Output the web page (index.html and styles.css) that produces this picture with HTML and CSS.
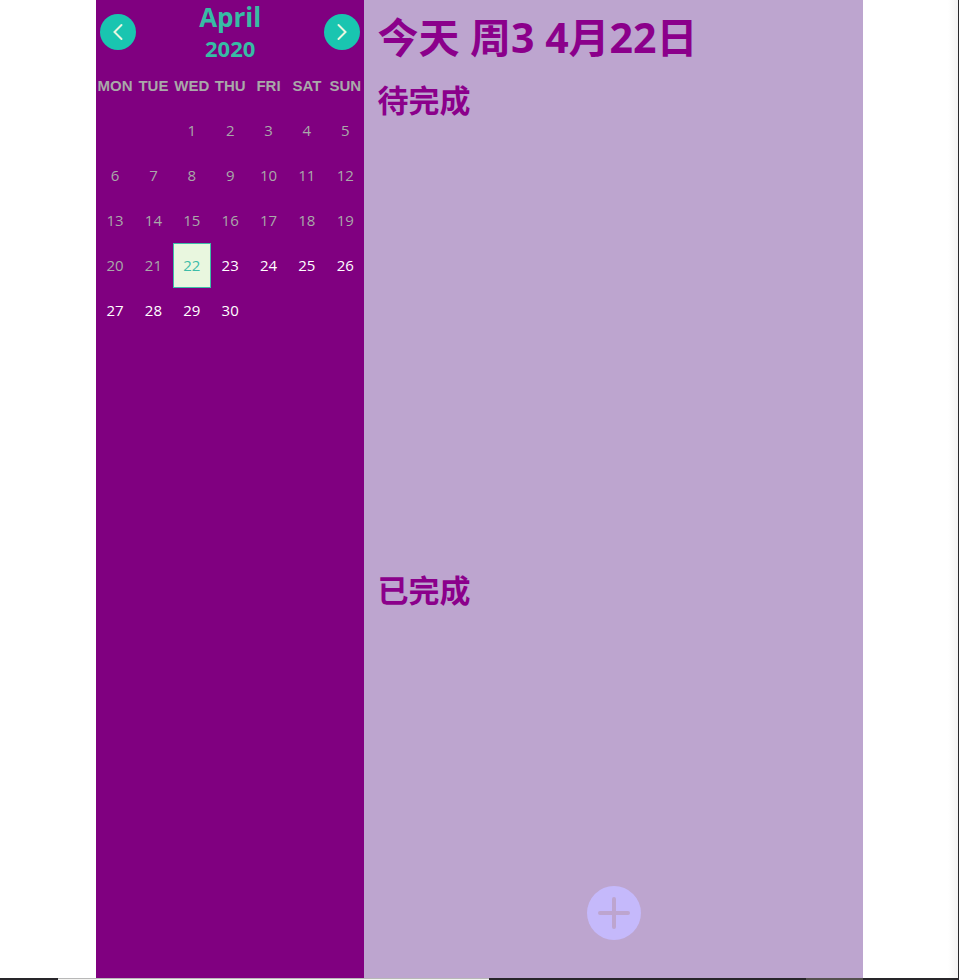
FILE: index.html
```
<!DOCTYPE html>
<html lang="zh-CN">
<head>
<meta charset="utf-8">
<meta name="viewport" content="width=device-width, initial-scale=1">
<title>April 2020</title>
<link rel="stylesheet" href="styles.css">
</head>
<body>
<div class="window">
  <div class="app">
    <aside class="calendar">
      <header class="calendar-head">
        <button class="nav" type="button" aria-label="Previous month">
          <svg viewBox="0 0 36 36" aria-hidden="true"><circle cx="18" cy="18" r="18"/><path d="M21.5 11 14.5 18l7 7"/></svg>
        </button>
        <div class="period"><span class="month">April</span><span class="year">2020</span></div>
        <button class="nav" type="button" aria-label="Next month">
          <svg viewBox="0 0 36 36" aria-hidden="true"><circle cx="18" cy="18" r="18"/><path d="m14.5 11 7 7-7 7"/></svg>
        </button>
      </header>
      <table class="days">
        <thead>
          <tr><th>MON</th><th>TUE</th><th>WED</th><th>THU</th><th>FRI</th><th>SAT</th><th>SUN</th></tr>
        </thead>
        <tbody>
          <tr><td></td><td></td><td>1</td><td>2</td><td>3</td><td>4</td><td>5</td></tr>
          <tr><td>6</td><td>7</td><td>8</td><td>9</td><td>10</td><td>11</td><td>12</td></tr>
          <tr><td>13</td><td>14</td><td>15</td><td>16</td><td>17</td><td>18</td><td>19</td></tr>
          <tr><td>20</td><td>21</td><td class="today">22</td><td class="next">23</td><td class="next">24</td><td class="next">25</td><td class="next">26</td></tr>
          <tr><td class="next">27</td><td class="next">28</td><td class="next">29</td><td class="next">30</td><td></td><td></td><td></td></tr>
        </tbody>
      </table>
    </aside>
    <main class="tasks">
      <h1>今天 周3 4月22日</h1>
      <section class="pending"><h2>待完成</h2></section>
      <section class="done"><h2>已完成</h2></section>
      <button class="add" type="button" aria-label="Add">
        <svg viewBox="0 0 54 54" aria-hidden="true"><circle cx="27" cy="27" r="27"/><path d="M27 13v28M13 27h28"/></svg>
      </button>
    </main>
  </div>
</div>
<div class="edge"><i class="edge-a"></i><i class="edge-b"></i><i class="edge-c"></i><i class="edge-d"></i><i class="edge-e"></i></div>
</body>
</html>
```
FILE: styles.css
```
* { box-sizing: border-box; }
body {
  display: flex;
  flex-direction: column;
  min-height: 100vh;
  margin: 0;
  background: #fff;
  font-family: "Open Sans", "Noto Sans CJK SC", sans-serif;
}
.window {
  display: flex;
  flex: 1;
  justify-content: center;
  background: linear-gradient(to left, #28282c 1px, #f3f3f3 1px, #fff 11px);
}
.app { display: flex; width: 80%; }
.calendar { width: 35%; background: #800080; }
.calendar-head {
  display: flex;
  align-items: center;
  justify-content: space-between;
  height: 63px;
  padding: 0 4px;
}
button { padding: 0; border: 0; background: none; cursor: pointer; }
.nav { width: 36px; height: 36px; }
svg { display: block; width: 100%; height: 100%; fill: none; }
.nav circle { fill: #19c5b0; }
.nav path { stroke: #e8f6e0; stroke-width: 2; stroke-linecap: round; }
.period {
  display: flex;
  flex-direction: column;
  color: #37bca5;
  font-weight: 700;
  text-align: center;
}
.month { font-size: 26px; line-height: 34px; }
.year { font-size: 22px; line-height: 29px; }
.days {
  width: 100%;
  border-collapse: collapse;
  table-layout: fixed;
  color: #a9a9a9;
  font-size: 15px;
  text-align: center;
}
.days th, .days td { height: 45px; padding: 0; }
.days td { padding-bottom: 2px; }
.days th { font: 700 15px "Liberation Sans", sans-serif; }
.days .next { color: #fff; }
.days .today { background: #e9f7df; color: #3dbda8; box-shadow: inset 0 0 0 1px #3dbda8; }
.tasks {
  display: flex;
  flex: 1;
  flex-direction: column;
  padding: 7px 13px 38px;
  background: #bda5cf;
  color: #8b008b;
}
h1, h2 { margin: 0; font-weight: 700; }
h1 { font-size: 41px; line-height: 60px; }
h2 { font-size: 31px; line-height: 44px; }
.pending { flex: 20; padding-top: 11px; }
.done { flex: 13; }
.add { align-self: center; width: 54px; height: 54px; }
.add circle { fill: #c5b9fb; }
.add path { stroke: #bda5cf; stroke-width: 4; stroke-linecap: round; }
.edge { display: flex; height: 2px; background: #28262a; }
.edge-a { width: 6%; }
.edge-b { width: 45%; border-top: 1px solid #b8b8b8; background: #f4f4f2; }
.edge-c { width: 33%; }
.edge-d { width: 6%; background: #55514f; }
.edge-e { flex: 1; }
```
